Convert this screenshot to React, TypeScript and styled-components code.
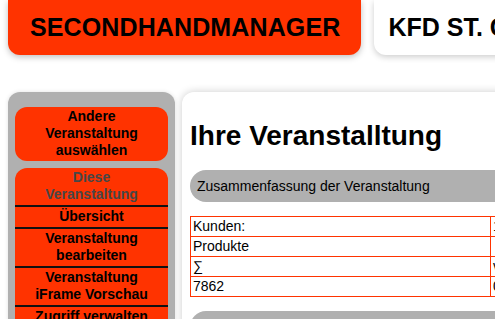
import styled, { createGlobalStyle } from 'styled-components';

const GlobalStyle = createGlobalStyle`
  html, body {
    margin: 0;
    padding: 0;
    overflow: hidden;
    background: #ffffff;
    font-family: "Liberation Sans", Arial, sans-serif;
    color: #000;
  }
`;

const Page = styled.div`
  padding: 0 8px;
  width: 1200px;
`;

const Header = styled.header`
  display: flex;
  gap: 13px;
  align-items: stretch;
`;

const Brand = styled.div`
  background: #ff3300;
  height: 55px;
  line-height: 55px;
  padding: 0 21px 0 22px;
  border-radius: 0 0 12px 12px;
  font-size: 25px;
  letter-spacing: 0.12px;
  font-weight: bold;
  white-space: nowrap;
  box-shadow: 0 2px 6px rgba(0, 0, 0, 0.25);
`;

const EventTitle = styled.div`
  background: #ffffff;
  height: 55px;
  line-height: 55px;
  width: 600px;
  padding: 0 14px;
  border-radius: 0 0 12px 12px;
  font-size: 25px;
  font-weight: bold;
  white-space: nowrap;
  box-shadow: 0 2px 6px rgba(0, 0, 0, 0.2);
`;

const Body = styled.div`
  display: flex;
  gap: 7px;
  align-items: flex-start;
  margin-top: 37px;
`;

const Sidebar = styled.nav`
  width: 153px;
  flex-shrink: 0;
  background: #b0b0b0;
  border-radius: 12px;
  padding: 15px 7px 12px;
  display: flex;
  flex-direction: column;
  gap: 7px;
  box-shadow: 0 0 4px rgba(0, 0, 0, 0.12);
`;

const NavGroup = styled.div`
  background: #ff3300;
  border-radius: 12px;
  overflow: hidden;
`;

const NavItem = styled.div<{ $muted?: boolean; $divider?: boolean }>`
  text-align: center;
  font-size: 14px;
  line-height: 17px;
  font-weight: bold;
  padding: 1px 12px 2px;
  color: ${(p) => (p.$muted ? '#474747' : '#000')};
  border-top: ${(p) => (p.$divider ? '2px solid #111' : 'none')};
`;

const Main = styled.main`
  width: 760px;
  flex-shrink: 0;
  background: #ffffff;
  border-radius: 12px;
  padding: 20px 8px 20px;
  box-shadow: 0 0 8px rgba(0, 0, 0, 0.2);
`;

const Title = styled.h1`
  margin: 8px 0 18px;
  font-size: 28px;
  line-height: 32px;
  font-weight: bold;
`;

const SectionBar = styled.div`
  background: #b0b0b0;
  height: 32px;
  line-height: 32px;
  border-radius: 16px;
  padding: 0 7px;
  font-size: 14px;
  margin-bottom: 14px;
`;

const Table = styled.table`
  border-collapse: collapse;
  font-size: 14px;
  margin-bottom: 14px;
`;

const Cell = styled.td<{ $w?: number }>`
  border: 1px solid #ff3300;
  padding: 0 2px;
  height: 19px;
  line-height: 19px;
  width: ${(p) => (p.$w ? `${p.$w}px` : 'auto')};
  white-space: nowrap;
`;

const rows: [string, string][] = [
  ['Kunden:', '12'],
  ['Produkte', ''],
  ['∑', 'verkauft'],
  ['7862', '0'],
];

export default function App() {
  return (
    <>
      <GlobalStyle />
      <Page>
        <Header>
          <Brand>SECONDHANDMANAGER</Brand>
          <EventTitle>KFD ST. GEORG</EventTitle>
        </Header>
        <Body>
          <Sidebar>
            <NavGroup>
              <NavItem>Andere Veranstaltung auswählen</NavItem>
            </NavGroup>
            <NavGroup>
              <NavItem $muted>Diese Veranstaltung</NavItem>
              <NavItem $divider>Übersicht</NavItem>
              <NavItem $divider>Veranstaltung bearbeiten</NavItem>
              <NavItem $divider>Veranstaltung iFrame Vorschau</NavItem>
              <NavItem $divider>Zugriff verwalten</NavItem>
              <NavItem $divider>Statistik</NavItem>
            </NavGroup>
          </Sidebar>
          <Main>
            <Title>Ihre Veranstalltung</Title>
            <SectionBar>Zusammenfassung der Veranstaltung</SectionBar>
            <Table>
              <tbody>
                {rows.map(([a, b], i) => (
                  <tr key={i}>
                    <Cell $w={295}>{a}</Cell>
                    <Cell $w={200}>{b}</Cell>
                  </tr>
                ))}
              </tbody>
            </Table>
            <SectionBar>Artikel</SectionBar>
          </Main>
        </Body>
      </Page>
    </>
  );
}
